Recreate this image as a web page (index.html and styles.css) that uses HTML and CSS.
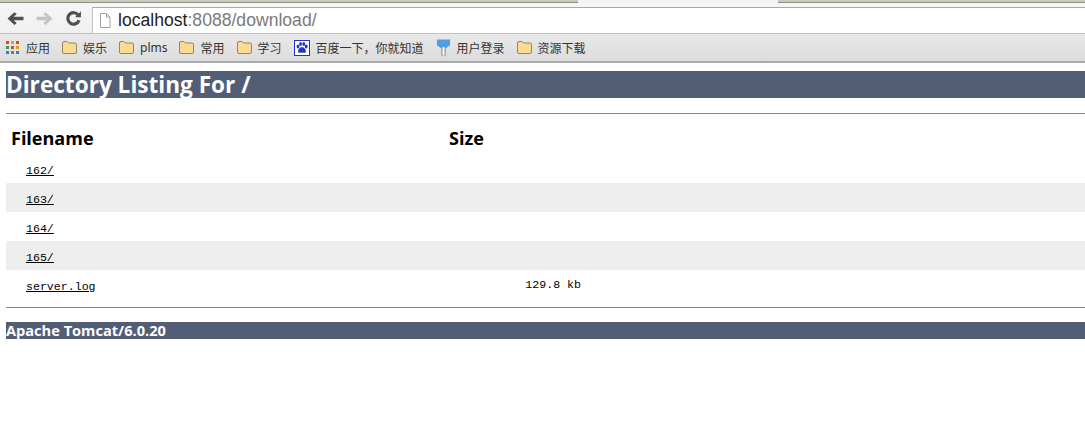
FILE: index.html
```html
<!DOCTYPE html>
<html lang="zh">
<head>
<meta charset="utf-8">
<title>Directory Listing For /</title>
<link rel="stylesheet" href="styles.css">
</head>
<body>
<div class="tabstrip">
  <div class="tab-side tab-left"></div>
  <div class="tab-active"></div>
  <div class="tab-side tab-right"></div>
</div>
<div class="toolbar">
  <svg class="nav nav-back" viewBox="0 0 16 16"><path d="M.5 8 L7 2 L9.2 3.8 L6.2 6.4 H15.5 V9.6 H6.2 L9.2 12.2 L7 14 Z"/></svg>
  <svg class="nav nav-forward" viewBox="0 0 16 16"><path d="M15.5 8 L9 2 L6.8 3.8 L9.8 6.4 H.5 V9.6 H9.8 L6.8 12.2 L9 14 Z"/></svg>
  <svg class="nav nav-reload" viewBox="0 0 16 16"><path class="reload-arc" d="M12.6 5 A5.4 5.4 0 1 0 13.2 9.6"/><path d="M9.5 6.8 H15 V1.2 Z"/></svg>
  <div class="omnibox">
    <svg class="page-icon" viewBox="0 0 12 15"><path d="M1.5 .5 H7.5 L11 4 V14.5 H1.5 Z M7.5 .5 V4 H11"/></svg>
    <span class="url"><span class="host">localhost</span>:8088/download/</span>
  </div>
</div>
<nav class="bookmarks">
  <a class="bm">
    <svg class="bm-icon" viewBox="0 0 15 15">
      <rect x="1" y="1" width="3" height="3" fill="#d9472f"/><rect x="6" y="1" width="3" height="3" fill="#e0a020"/><rect x="11" y="1" width="3" height="3" fill="#d9472f"/>
      <rect x="1" y="6" width="3" height="3" fill="#3f9a52"/><rect x="6" y="6" width="3" height="3" fill="#d9472f"/><rect x="11" y="6" width="3" height="3" fill="#e0a020"/>
      <rect x="1" y="11" width="3" height="3" fill="#3f78c8"/><rect x="6" y="11" width="3" height="3" fill="#3f9a52"/><rect x="11" y="11" width="3" height="3" fill="#3f78c8"/>
    </svg>应用</a>
  <a class="bm"><svg class="bm-icon folder" viewBox="0 0 15 13"><path d="M.5 2 Q.5 .5 2 .5 H5 L6.5 2 H13 Q14.5 2 14.5 3.5 V11 Q14.5 12.5 13 12.5 H2 Q.5 12.5 .5 11 Z"/></svg>娱乐</a>
  <a class="bm"><svg class="bm-icon folder" viewBox="0 0 15 13"><path d="M.5 2 Q.5 .5 2 .5 H5 L6.5 2 H13 Q14.5 2 14.5 3.5 V11 Q14.5 12.5 13 12.5 H2 Q.5 12.5 .5 11 Z"/></svg>plms</a>
  <a class="bm"><svg class="bm-icon folder" viewBox="0 0 15 13"><path d="M.5 2 Q.5 .5 2 .5 H5 L6.5 2 H13 Q14.5 2 14.5 3.5 V11 Q14.5 12.5 13 12.5 H2 Q.5 12.5 .5 11 Z"/></svg>常用</a>
  <a class="bm"><svg class="bm-icon folder" viewBox="0 0 15 13"><path d="M.5 2 Q.5 .5 2 .5 H5 L6.5 2 H13 Q14.5 2 14.5 3.5 V11 Q14.5 12.5 13 12.5 H2 Q.5 12.5 .5 11 Z"/></svg>学习</a>
  <a class="bm"><svg class="bm-icon paw" viewBox="0 0 16 16"><rect x=".5" y=".5" width="15" height="15" fill="#fff" stroke="#2532c8"/><g fill="#2532c8"><ellipse cx="4" cy="6.5" rx="1.4" ry="1.9"/><ellipse cx="6.6" cy="4" rx="1.4" ry="1.9"/><ellipse cx="9.8" cy="4" rx="1.4" ry="1.9"/><ellipse cx="12.2" cy="6.5" rx="1.4" ry="1.9"/><path d="M8 7 C10 7 12.5 10 11.8 12 C11 13.5 9 12.6 8 12.6 C7 12.6 5 13.5 4.2 12 C3.5 10 6 7 8 7 Z"/></g></svg>百度一下，你就知道</a>
  <a class="bm"><svg class="bm-icon pin" viewBox="0 0 16 18"><path fill="#4f9fe0" d="M1 0 H15 V6 L11 9 H5 L1 6 Z"/><path fill="#8fa0ac" d="M5.5 9 H10.5 V17 Q8 18.5 5.5 17 Z"/><path fill="#fff" d="M7 8 H9 V17 H7 Z"/></svg>用户登录</a>
  <a class="bm"><svg class="bm-icon folder" viewBox="0 0 15 13"><path d="M.5 2 Q.5 .5 2 .5 H5 L6.5 2 H13 Q14.5 2 14.5 3.5 V11 Q14.5 12.5 13 12.5 H2 Q.5 12.5 .5 11 Z"/></svg>资源下载</a>
</nav>
<main class="page">
  <h1 class="title">Directory Listing For /</h1>
  <hr class="rule rule-top">
  <table class="listing">
    <colgroup><col class="col-name"><col class="col-size"><col></colgroup>
    <thead>
      <tr><th>Filename</th><th>Size</th><th></th></tr>
    </thead>
    <tbody>
      <tr><td><a href="#">162/</a></td><td></td><td></td></tr>
      <tr class="alt"><td><a href="#">163/</a></td><td></td><td></td></tr>
      <tr><td><a href="#">164/</a></td><td></td><td></td></tr>
      <tr class="alt"><td><a href="#">165/</a></td><td></td><td></td></tr>
      <tr><td><a href="#">server.log</a></td><td class="size">129.8 kb</td><td></td></tr>
    </tbody>
  </table>
  <hr class="rule rule-bottom">
  <h3 class="footer">Apache Tomcat/6.0.20</h3>
</main>
</body>
</html>
```
FILE: styles.css
```css
* { box-sizing: border-box; }
html, body { margin: 0; padding: 0; background: #fff; }
body { overflow: hidden; height: 444px; }

.tabstrip { display: flex; height: 3px; background: #fff; }
.tab-side { background: #c9c9bd; border-bottom: 1px solid #8f8f85; }
.tab-left { width: 578px; }
.tab-active { width: 200px; background: #f4f4f4; }
.tab-right { flex: 1; }

.toolbar {
  display: flex;
  align-items: center;
  height: 30px;
  padding-left: 7px;
  background: linear-gradient(#f6f6f6, #f0f0f0);
}
.nav { width: 17px; height: 17px; flex: none; margin-right: 12px; margin-top: 1px; }
.nav-back { fill: #4f4f4f; }
.nav-forward { fill: #c4c4c4; }
.nav-reload { fill: #4f4f4f; margin-right: 10px; }
.reload-arc { fill: none; stroke: #4f4f4f; stroke-width: 3; }

.omnibox {
  display: flex;
  align-items: center;
  flex: 1;
  height: 26px;
  margin-top: 4px;
  padding-left: 6px;
  background: #fff;
  border-top: 1px solid #a8a8a8;
  border-left: 1px solid #c4c4c4;
}
.page-icon { width: 12px; height: 15px; fill: #fff; stroke: #a0a0a0; stroke-width: 1; margin-right: 7px; flex: none; }
.url { font: 17.6px "Liberation Sans", Arial, sans-serif; color: #7a7a7a; white-space: nowrap; }
.host { color: #222; }

.bookmarks {
  display: flex;
  align-items: center;
  gap: 12px;
  height: 30px;
  padding-left: 5px;
  background: linear-gradient(#e9e9e9, #dcdcdc);
  border-top: 1px solid #c2c2c2;
  border-bottom: 2px solid #aaa;
}
.bm {
  display: flex;
  align-items: center;
  gap: 6px;
  font: 12px "Noto Sans", "Noto Sans CJK SC", sans-serif;
  color: #333;
  white-space: nowrap;
}
.bm-icon { width: 15px; height: 15px; flex: none; }
.folder { height: 13px; fill: #fbdb92; stroke: #8f8468; stroke-width: 1; }
.paw { width: 16px; height: 16px; }
.pin { width: 15px; height: 18px; }

.page { padding: 8px 0 0 6px; }
.title {
  margin: 0;
  height: 27px;
  font: bold 22.6px/27px "Open Sans", Tahoma, sans-serif;
  color: #fff;
  background: #525d76;
  white-space: nowrap;
}
.rule { height: 1px; margin: 0; border: 0; background: #8a8a8a; }
.rule-top { margin-top: 15px; }
.rule-bottom { margin-top: 8px; }

.listing { width: 100%; table-layout: fixed; border-collapse: collapse; margin-top: 8px; }
.col-name { width: 438px; }
.col-size { width: 137px; }
.listing th {
  height: 32px;
  padding: 0 0 0 5px;
  text-align: left;
  font: bold 18px "Open Sans", Tahoma, sans-serif;
  color: #000;
}
.listing td {
  height: 29px;
  padding: 3px 0 0 20px;
  font: 11.6px "Liberation Mono", "Courier New", monospace;
  color: #000;
}
.listing a { color: #000; }
.listing .size { padding: 0; text-align: right; vertical-align: middle; }
.alt { background: #eee; }

.footer {
  margin: 14px 0 0;
  height: 17px;
  font: bold 14.6px/17px "Open Sans", Tahoma, sans-serif;
  color: #fff;
  background: #525d76;
  white-space: nowrap;
}
```
